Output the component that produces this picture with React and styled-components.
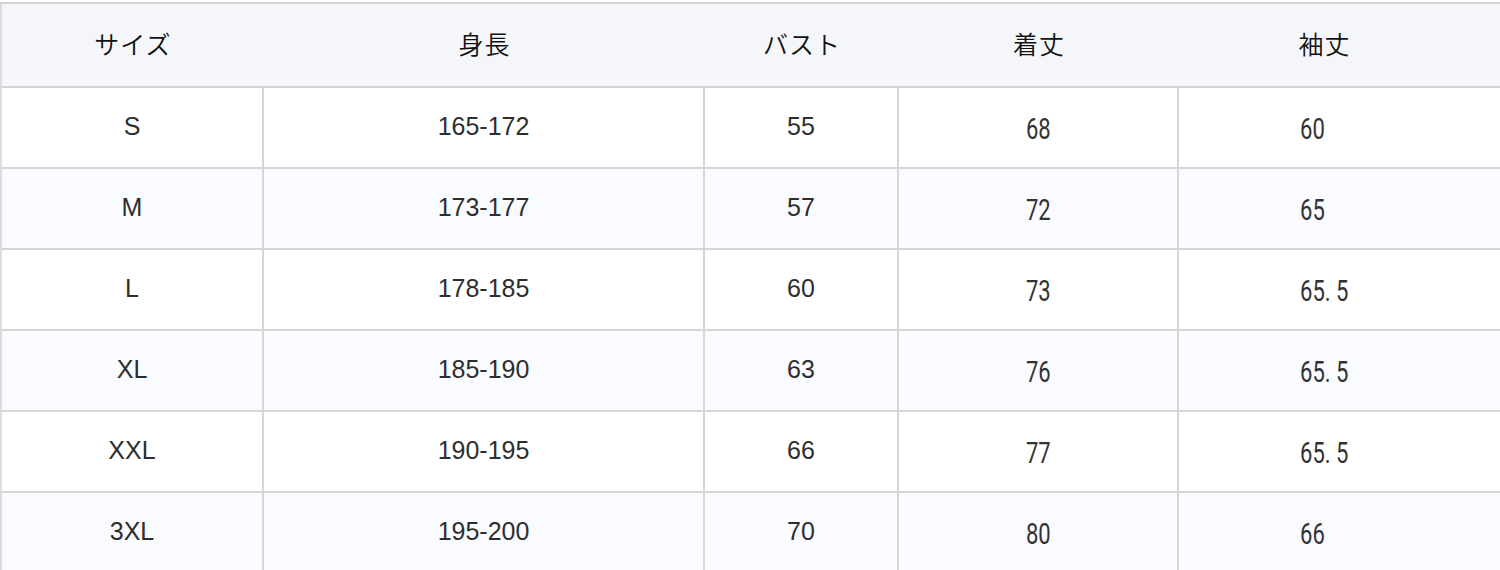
import styled, { createGlobalStyle } from "styled-components";

const GlobalStyle = createGlobalStyle`
  html, body {
    margin: 0;
    padding: 0;
    background: #fff;
  }
  body {
    font-family: "Liberation Sans", Arial, sans-serif;
  }
`;

const Page = styled.div`
  width: 1500px;
  height: 570px;
  overflow: hidden;
  padding-top: 2px;
  box-sizing: border-box;
`;

const Table = styled.div`
  border-top: 2px solid #d2d2d2;
  border-left: 2px solid #dcdcdc;
`;

const columns = "262px 441px 194px 280px 1fr";

const HeaderRow = styled.div`
  display: grid;
  grid-template-columns: ${columns};
  height: 84px;
  box-sizing: border-box;
  background: #f5f6fa;
  border-bottom: 2px solid #d2d2d2;
`;

const HeadCell = styled.div`
  display: flex;
  align-items: center;
  justify-content: center;
  padding-bottom: 4px;
  padding-right: ${(p) => (p.$last ? "30px" : "0")};
  font-family: "Noto Sans CJK JP", "Noto Sans CJK SC", sans-serif;
  font-size: 25px;
  font-weight: 350;
  color: #111;
  letter-spacing: 1px;
`;

const Row = styled.div`
  display: grid;
  grid-template-columns: ${columns};
  height: 81px;
  box-sizing: border-box;
  background: ${(p) => (p.$shaded ? "#f9fbff" : "#ffffff")};
  border-bottom: 2px solid #d6d6d6;
`;

const Cell = styled.div`
  display: flex;
  align-items: center;
  justify-content: ${(p) => (p.$left ? "flex-start" : "center")};
  padding-left: ${(p) => (p.$left ? "121px" : "0")};
  padding-bottom: 2px;
  box-sizing: border-box;
  border-right: ${(p) => (p.$edge ? "none" : "2px solid #d6d6d6")};
  font-size: 25px;
  color: #2e2e2e;
`;

const Narrow = styled.span`
  display: inline-block;
  font-family: Roboto, "Liberation Sans", sans-serif;
  font-size: 29px;
  font-weight: 400;
  color: #333;
  transform: scaleX(0.76);
  transform-origin: ${(p) => (p.$left ? "left center" : "center")};
  margin-top: 4px;
`;

const headers = ["サイズ", "身長", "バスト", "着丈", "袖丈"];

const rows = [
  ["S", "165-172", "55", "68", "60"],
  ["M", "173-177", "57", "72", "65"],
  ["L", "178-185", "60", "73", "65. 5"],
  ["XL", "185-190", "63", "76", "65. 5"],
  ["XXL", "190-195", "66", "77", "65. 5"],
  ["3XL", "195-200", "70", "80", "66"],
];

export default function App() {
  return (
    <>
      <GlobalStyle />
      <Page>
        <Table>
          <HeaderRow>
            {headers.map((h, i) => (
              <HeadCell key={h} $last={i === headers.length - 1}>
                {h}
              </HeadCell>
            ))}
          </HeaderRow>
          {rows.map((r, i) => (
            <Row key={r[0]} $shaded={i % 2 === 1}>
              <Cell>{r[0]}</Cell>
              <Cell>{r[1]}</Cell>
              <Cell>{r[2]}</Cell>
              <Cell>
                <Narrow>{r[3]}</Narrow>
              </Cell>
              <Cell $edge $left>
                <Narrow $left>{r[4]}</Narrow>
              </Cell>
            </Row>
          ))}
        </Table>
      </Page>
    </>
  );
}
